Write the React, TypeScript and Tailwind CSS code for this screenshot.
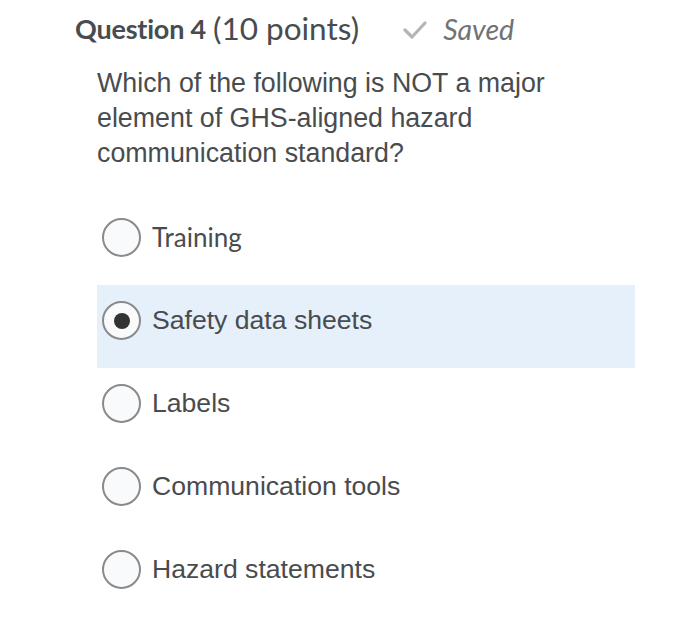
import React from "react";

const options = [
  { label: "Training", selected: false, font: "Lato, 'Liberation Sans', sans-serif", size: "26px" },
  { label: "Safety data sheets", selected: true, font: "'Liberation Sans', Arial, sans-serif", size: "26.6px" },
  { label: "Labels", selected: false, font: "'Liberation Sans', Arial, sans-serif", size: "26.6px" },
  { label: "Communication tools", selected: false, font: "'Liberation Sans', Arial, sans-serif", size: "26.6px" },
  { label: "Hazard statements", selected: false, font: "'Liberation Sans', Arial, sans-serif", size: "26.6px" },
];

export default function App() {
  return (
    <div className="w-[700px] h-[639px] bg-white text-[#494c4e] overflow-hidden">
      <div className="pl-[75px] pt-[14px] flex items-center h-[44px] font-['Lato',sans-serif]">
        <span className="text-[27px] font-bold tracking-[-0.2px]">Question 4</span>
        <span className="text-[31.5px] ml-[7px]">(10 points)</span>
        <span className="ml-[44px] flex items-center text-[#6e7376]">
          <svg width="24" height="20" viewBox="0 0 24 20" className="mt-[2px]">
            <path d="M2 10 L9 17 L22 3" fill="none" stroke="#b5b5b5" strokeWidth="3.2" strokeLinecap="round" strokeLinejoin="round" />
          </svg>
          <span className="ml-[16px] text-[28.5px] italic">Saved</span>
        </span>
      </div>
      <div className="pl-[97px] pt-[22px] text-[26.8px] leading-[35px] font-['Liberation_Sans',Arial,sans-serif] w-[640px]">
        Which of the following is NOT a major<br />
        element of GHS-aligned hazard<br />
        communication standard?
      </div>
      <div className="ml-[97px] mt-[31px] w-[538px] flex flex-col">
        {options.map((o) => (
          <div
            key={o.label}
            className={`h-[83px] pt-[16px] pl-[5px] flex items-start ${o.selected ? "bg-[#e6f0fb]" : ""}`}
          >
            <div className="flex items-center">
              <div className="w-[39px] h-[39px] rounded-full border-2 border-[#8a8a8a] bg-[#f9fafc] flex items-center justify-center">
                {o.selected && <div className="w-[16px] h-[16px] rounded-full bg-[#333]" />}
              </div>
              <span className="ml-[11px]" style={{ fontFamily: o.font, fontSize: o.size }}>
                {o.label}
              </span>
            </div>
          </div>
        ))}
      </div>
    </div>
  );
}
